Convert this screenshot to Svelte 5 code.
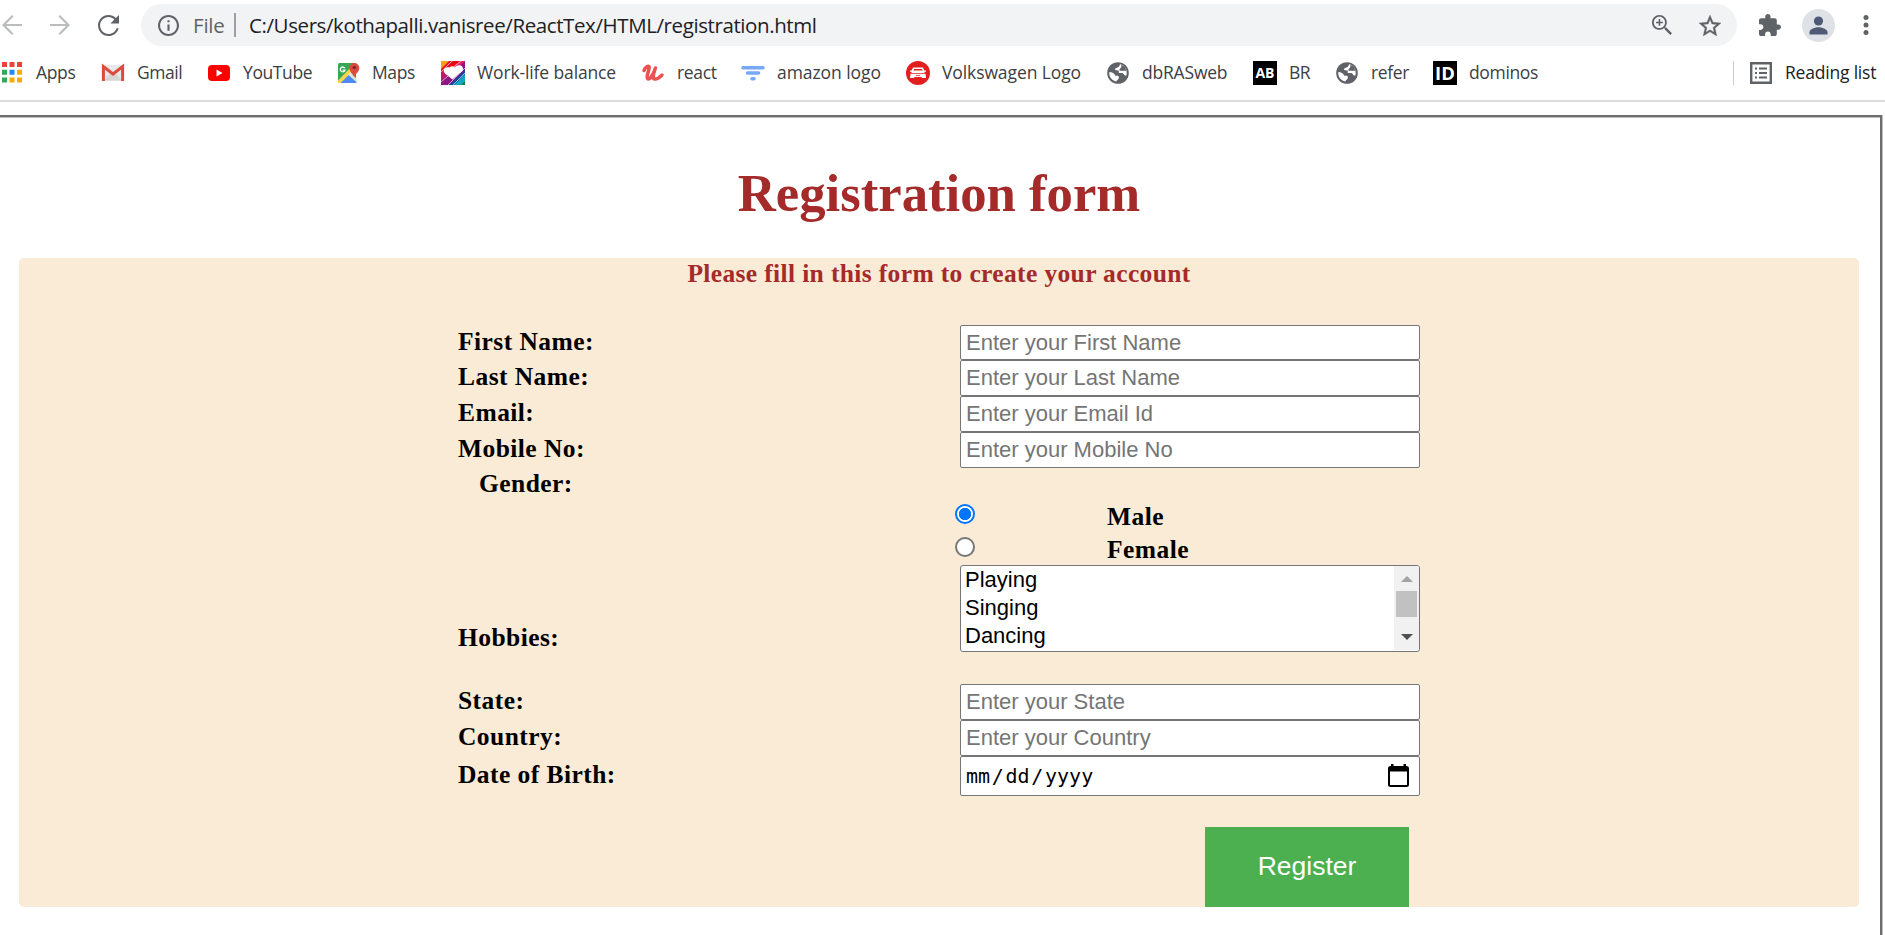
<script>
  const bookmarks = [
    { icon: 'apps', label: 'Apps', width: 101, spacing: -0.35 },
    { icon: 'gmail', label: 'Gmail', width: 106, spacing: -0.45 },
    { icon: 'youtube', label: 'YouTube', width: 129, spacing: -0.4 },
    { icon: 'maps', label: 'Maps', width: 105, spacing: -0.4 },
    { icon: 'heart', label: 'Work-life balance', width: 200, spacing: -0.13 },
    { icon: 'udemy', label: 'react', width: 100, spacing: -0.35 },
    { icon: 'filter', label: 'amazon logo', width: 165, spacing: -0.07 },
    { icon: 'car', label: 'Volkswagen Logo', width: 200, spacing: -0.1 },
    { icon: 'globe', label: 'dbRASweb', width: 147, spacing: -0.2 },
    { icon: 'ab', label: 'BR', width: 82, spacing: -0.6 },
    { icon: 'globe', label: 'refer', width: 98, spacing: -0.35 },
    { icon: 'id', label: 'dominos', width: 120, spacing: -0.35 }
  ];
  const identity = [
    ['First Name:', 'Enter your First Name'],
    ['Last Name:', 'Enter your Last Name'],
    ['Email:', 'Enter your Email Id'],
    ['Mobile No:', 'Enter your Mobile No']
  ];
  const place = [
    ['State:', 'Enter your State'],
    ['Country:', 'Enter your Country']
  ];
  const hobbies = ['Playing', 'Singing', 'Dancing'];
  const appColors = ['#ea4335', '#ea4335', '#ea4335', '#34a853', '#1a8cff', '#fbab00', '#34a853', '#fbab00', '#fbab00'];
</script>

{#snippet glyph(name)}
  <svg class="glyph" viewBox="0 0 24 24">
    {#if name === 'apps'}
      {#each appColors as color, i}
        <rect x={2 + (i % 3) * 7.5} y={1 + Math.floor(i / 3) * 7.75} width="5" height="5" fill={color} />
      {/each}
    {:else if name === 'gmail'}
      <rect x="1" y="4" width="22" height="16" rx="1.5" fill="#e9e9e9" />
      <path d="M3 19.5 9.5 12h5l6.500 7.500z" fill="#d6d6d6" />
      <path d="M2.400 20V5.500L12 13l9.600-7.500V20" fill="none" stroke="#dd4b3e" stroke-width="3" />
    {:else if name === 'youtube'}
      <rect x="1" y="4" width="22" height="16" rx="4" fill="#f00" />
      <path d="M9.500 8.500v7l6-3.500z" fill="#fff" />
    {:else if name === 'maps'}
      <path d="M2 3.500Q2 2 3.500 2H20v20H2z" fill="#34a853" />
      <path d="M3 22 12 13l9 9z" fill="#4c8bf5" />
      <path d="M2 19.500 17 4l3 3L4.500 22H2z" fill="#fdd446" />
      <path d="m12 13.500 2.500-2.500 7 8v3z" fill="#e3e3e3" />
      <path d="M8.800 7.200A2.400 2.400 0 1 0 9 9.200H6.700" fill="none" stroke="#fff" stroke-width="1.300" />
      <path d="M18.300 17c-.5-4.500-5-5.500-5-10a5 5 0 0 1 10 0c0 4.500-4.500 5.500-5 10z" fill="#dd4b3e" />
      <circle cx="18.300" cy="6.500" r="1.800" fill="#7a2c27" />
    {:else if name === 'heart'}
      <rect width="24" height="24" fill="#8b1580" />
      <path d="M0 0h14L0 13z" fill="#f7a11b" />
      <path d="M8 0h7L0 15V8z" fill="#e8112d" />
      <path d="M14 0h10L10 14z" fill="#e91e63" />
      <path d="M14 0h4L6 12H2z" fill="#f20000" />
      <path d="M0 12 5 8l7 12-4 4H0z" fill="#c2186b" />
      <path d="M0 20 8 13l6 6-5 5H0z" fill="#8e1683" />
      <path d="M24 9v7l-8 8H8z" fill="#134a9f" />
      <path d="M24 13v11H13z" fill="#12a5c4" />
      <path d="M24 20v4h-4z" fill="#17813f" />
      <path d="M0 11 11 0M4 13 20 0M0 21l7-6M7 24 24 7M12 24l12-12" stroke="#fff" stroke-width=".6" />
      <path d="M11.500 18.500 4 12.500C1 9 4 5.500 8.500 6.500c1.500-1.700 4-1.500 5 0C17 3 21.500 4 22 7.500c.3 3-3 4-4.500 5.500z" fill="#fff" />
    {:else if name === 'udemy'}
      <path d="M3 9.500C4 6 7 4.800 8 5.500c1.500 1.500-3.200 9-1.500 12 1.800 2.500 6-4 8-10.500-2 5.500-3.300 10.500-1 11 3 .8 5-1.500 7.500-4" fill="none" stroke="#ec5252" stroke-width="3.500" stroke-linecap="round" stroke-linejoin="round" />
    {:else if name === 'filter'}
      <path d="M2 6.700h20M6.500 12h11M11 17.700h2" stroke="#76a9fa" stroke-width="3.600" stroke-linecap="round" />
    {:else if name === 'car'}
      <circle cx="12" cy="12" r="12" fill="#e21f1f" />
      <path d="M7 6.500h10l1.300 3H20v1.300h-1.300l-.4 1.200H5.700l-.4-1.200H4V9.500h1.700zM4.500 12.700h15l.5 4.300h-4l-.5-1h-7l-.5 1H4z" fill="#fff" />
      <path d="M8 8h8l.5 1.500h-9zM6.500 14h3l.7.800h3.600l.7-.8h3" fill="#e21f1f" />
    {:else if name === 'globe'}
      <circle cx="12" cy="12" r="10.800" fill="#5f6368" />
      <path d="M14 3.200c-.6 2-1 2.800-2.500 3.200-2.300.4-2.800 1.400-2.300 2.400.8 1.200 2.700.4 3.600 1v2.200h2.500c1.600 0 2.500.7 2.800 1.700.4.900 1.300.9 2.400.5 1-5-1.300-9.800-6.500-11zM3.300 11c-.5 5 2.700 8.600 7 9.400.3-1.500 2.600-1.800 2.600-4.200 0-1-.8-1.500-1.800-1.500H9.500C8.500 12.500 6 11 3.300 11z" fill="#fff" />
      <path d="M15 3.500c1 1.700.2 3.200-1.200 4.500-.8.800-.3 1.800 1 1.800h5.500L19 6z" fill="#5f6368" />
    {:else if name === 'ab' || name === 'id'}
      <rect width="24" height="24" fill="#000" />
      <text x="12" y={name === 'id' ? 18.6 : 17} text-anchor="middle" font-family="Open Sans, sans-serif" font-size={name === 'id' ? 18.5 : 14} font-weight="700" fill="#fff">{name.toUpperCase()}</text>
    {/if}
  </svg>
{/snippet}

{#snippet field(label, hint, i)}
  <div class="row" class:first={i === 0 && label[0] === 'F'}>
    <label class="caption" for={label}>{label}</label>
    <input class="box" id={label} type="text" placeholder={hint} />
  </div>
{/snippet}

<div class="screen">
  <header>
    <div class="toolbar">
      <svg class="nav back" viewBox="4 4 16 16"><path d="M20 11.200H7.200l6-6L12 4l-8 8 8 8 1.200-1.200-6-6H20z" /></svg>
      <svg class="nav forward" viewBox="4 4 16 16"><path d="M4 11.200h12.800l-6-6L12 4l8 8-8 8-1.200-1.200 6-6H4z" /></svg>
      <svg class="nav reload" viewBox="4 4 16 16"><path d="M17.650 6.350C16.200 4.900 14.210 4 12 4c-4.420 0-7.990 3.580-7.990 8s3.570 8 7.990 8c3.730 0 6.840-2.550 7.730-6h-1.600c-.82 2.600-3.240 4.400-6.130 4.400-3.550 0-6.400-2.850-6.400-6.400s2.850-6.400 6.400-6.400c1.800 0 3.340.75 4.480 1.920L13.500 10.500H20V4z" /></svg>
      <div class="omnibox">
        <svg class="info" viewBox="2 2 20 20"><path d="M11 7h2v2h-2zm0 4h2v6h-2zm1-9C6.480 2 2 6.480 2 12s4.480 10 10 10 10-4.480 10-10S17.520 2 12 2zm0 18c-4.410 0-8-3.590-8-8s3.590-8 8-8 8 3.590 8 8-3.590 8-8 8z" /></svg>
        <span class="scheme">File</span>
        <span class="bar"></span>
        <span class="url">C:/Users/kothapalli.vanisree/ReactTex/HTML/registration.html</span>
        <svg class="zoom" viewBox="3 3 17.500 17.500"><path d="M15.500 14h-.79l-.28-.27C15.410 12.590 16 11.110 16 9.500 16 5.910 13.090 3 9.500 3S3 5.910 3 9.500 5.910 16 9.500 16c1.610 0 3.090-.59 4.230-1.570l.27.28v.79l5 4.990L20.490 19l-4.990-5zm-6 .4C6.800 14.400 4.600 12.200 4.600 9.500s2.200-4.900 4.900-4.900 4.900 2.200 4.900 4.900-2.200 4.900-4.900 4.900z" /><path d="M12.500 10.200h-2.300v2.300H8.800v-2.300H6.500V8.800h2.300V6.500h1.400v2.300h2.300z" /></svg>
        <svg class="star" viewBox="2 2 20 19"><path d="M22 9.240l-7.190-.62L12 2 9.190 8.630 2 9.240l5.460 4.730L5.820 21 12 17.270 18.180 21l-1.630-7.030L22 9.240zM12 15.400l-3.760 2.270 1-4.280-3.320-2.880 4.380-.38L12 6.100l1.710 4.040 4.380.38-3.320 2.880 1 4.280L12 15.400z" stroke="#5f6368" stroke-width=".3" /></svg>
      </div>
      <svg class="puzzle" viewBox="2 1 21 21"><path d="M20.500 11H19V7c0-1.100-.9-2-2-2h-4V3.500C13 2.120 11.880 1 10.500 1S8 2.120 8 3.500V5H4c-1.100 0-1.990.9-1.990 2v3.800H3.500c1.490 0 2.700 1.210 2.700 2.700s-1.210 2.700-2.700 2.700H2V20c0 1.100.9 2 2 2h3.800v-1.500c0-1.490 1.210-2.700 2.700-2.700 1.490 0 2.700 1.210 2.700 2.700V22H17c1.100 0 2-.9 2-2v-4h1.500c1.380 0 2.500-1.120 2.500-2.500S21.880 11 20.500 11z" /></svg>
      <svg class="avatar" viewBox="0 0 33 33"><circle cx="16.500" cy="16.500" r="16.500" fill="#dee1e6" /><circle cx="16.500" cy="12" r="4.600" /><path d="M7.500 25.500v-2.300c0-3.400 6-5 9-5s9 1.600 9 5v2.300z" /></svg>
      <svg class="dots" viewBox="0 0 6 22"><circle cx="3" cy="3.500" r="2.500" /><circle cx="3" cy="11" r="2.500" /><circle cx="3" cy="18.500" r="2.500" /></svg>
    </div>
    <nav class="bookmarks">
      {#each bookmarks as b}
        <a class="bookmark" href="#top" style:width="{b.width}px">
          {@render glyph(b.icon)}
          <span style:letter-spacing="{b.spacing}px">{b.label}</span>
        </a>
      {/each}
      <div class="reading">
        <svg viewBox="0 0 22 22"><path d="M1.200 1.200h19.600v19.600H1.200z" fill="none" stroke="#5f6368" stroke-width="2.400" /><path d="M5 5.500h2v2H5zm4 0h8v2H9zM5 10h2v2H5zm4 0h8v2H9zm-4 4.500h2v2H5zm4 0h8v2H9z" /></svg>
        <span>Reading list</span>
      </div>
    </nav>
  </header>

  <main>
    <h1>Registration form</h1>
    <form>
      <h2>Please fill in this form to create your account</h2>
      {#each identity as [label, hint], i}
        {@render field(label, hint, i)}
      {/each}
      <div class="gender caption">Gender:</div>
      <label class="choice"><input type="radio" name="gender" checked /><span class="caption">Male</span></label>
      <label class="choice second"><input type="radio" name="gender" /><span class="caption">Female</span></label>
      <div class="row hobbies">
        <span class="caption">Hobbies:</span>
        <div class="list">
          <ul>
            {#each hobbies as h}<li>{h}</li>{/each}
          </ul>
          <div class="scroll">
            <svg viewBox="0 0 12 6"><path d="M0 6 6 0l6 6z" fill="#a3a3a3" /></svg>
            <div class="thumb"></div>
            <svg viewBox="0 0 12 6"><path d="m0 0 6 6 6-6z" fill="#505050" /></svg>
          </div>
        </div>
      </div>
      {#each place as [label, hint], i}
        {@render field(label, hint, i)}
      {/each}
      <div class="row dob">
        <span class="caption">Date of Birth:</span>
        <div class="box date">
          <span>mm</span><span>/</span><span>dd</span><span>/</span><span>yyyy</span>
          <svg viewBox="0 0 21 23"><path d="M3 0h2.500v2h10V0H18v2h.5A2.500 2.500 0 0 1 21 4.500v16a2.500 2.500 0 0 1-2.500 2.500h-16A2.500 2.500 0 0 1 0 20.500v-16A2.500 2.500 0 0 1 2.500 2H3zM2 7.500V21h17V7.500z" /></svg>
        </div>
      </div>
      <button type="button">Register</button>
    </form>
  </main>
</div>

<style>
  :global(body) { overflow: hidden; background: #fff; }
  * { box-sizing: border-box; }
  .screen { width: 1885px; height: 935px; overflow: hidden; display: flex; flex-direction: column; }
  svg { display: block; flex: none; }
  header { height: 102px; flex: none; border-bottom: 2px solid #dadce0; font-family: "Open Sans", "Noto Sans", sans-serif; }
  .toolbar { display: flex; align-items: center; height: 50px; fill: #5f6368; }
  .nav { width: 20px; height: 20px; }
  .back { margin-left: 2px; fill: #babcbe; }
  .forward { margin-left: 28px; fill: #babcbe; }
  .reload { margin-left: 28px; width: 21px; height: 21px; }
  .omnibox { display: flex; align-items: center; width: 1596px; height: 42px; margin-left: 22px; padding-left: 17px; border-radius: 21px; background: #f1f3f4; font-size: 20.500px; white-space: nowrap; }
  .info { width: 21px; height: 21px; }
  .scheme { width: 41px; margin-left: 14px; color: #5f6368; letter-spacing: -.2px; }
  .bar { width: 2px; height: 24px; background: #9aa0a6; }
  .url { flex: 1; margin-left: 13px; color: #202124; letter-spacing: -.4px; }
  .zoom { width: 20px; height: 20px; }
  .star { width: 22px; height: 21px; margin: 0 16px 0 27px; }
  .puzzle { width: 22px; height: 22px; margin-left: 22px; }
  .avatar { width: 33px; height: 33px; margin-left: 21px; fill: #4f5b76; }
  .dots { width: 6px; height: 22px; margin-left: 28px; }
  .bookmarks { display: flex; align-items: center; height: 46px; font-size: 17.500px; color: #3c4043; white-space: nowrap; }
  .bookmark { display: flex; align-items: center; gap: 12px; flex: none; color: inherit; text-decoration: none; }
  .bookmark span, .reading span { padding-bottom: 2px; }
  .glyph { width: 24px; height: 24px; }
  .reading { display: flex; align-items: center; gap: 13px; height: 24px; margin-left: 180px; padding-left: 16px; border-left: 1px solid #c8cacd; color: #202124; letter-spacing: -.2px; }
  .reading svg { width: 22px; height: 22px; fill: #5f6368; }

  main { width: 1882px; height: 820px; margin-top: 13px; flex: none; border-top: 2px solid #6d6d6d; border-right: 2px solid #6d6d6d; box-shadow: inset 0 1px #c0c0c0, 1px 0 #c0c0c0; font-family: "Liberation Serif", serif; }
  h1 { margin: 0; padding: 46px 2px 0 0; height: 141px; font-size: 52.700px; line-height: 60px; color: #a52a2a; text-align: center; }
  form { width: 1840px; height: 649px; margin-left: 19px; border-radius: 5px; background: #faebd7; overflow: hidden; }
  h2 { margin: 0; height: 67px; font-size: 25.500px; line-height: 32px; letter-spacing: .36px; color: #a52a2a; text-align: center; }
  .caption { font-size: 25.500px; line-height: 34px; letter-spacing: .44px; font-weight: 700; color: #000; white-space: nowrap; }
  .row { display: grid; grid-template-columns: 502px 460px; height: 36px; padding-left: 439px; }
  .first { height: 35px; }
  .box { width: 460px; height: 100%; border: 1px solid #767676; border-radius: 2px; background: #fff; padding: 0 0 1px 5px; font: 22px "Liberation Sans", Arial, sans-serif; outline: 0; }
  .first .box { padding-bottom: 0; }
  .box::placeholder { color: #757575; opacity: 1; }
  .gender { height: 32px; padding-left: 460px; line-height: 32px; }
  .choice { display: flex; align-items: center; height: 33px; padding: 0 0 5px 935.500px; }
  .choice input { appearance: none; width: 20px; height: 20px; flex: none; margin: 0 132.500px 0 0; border: 2px solid #767676; border-radius: 50%; background: #fff; }
  .choice input:checked { border-color: #0075ff; background: radial-gradient(circle, #0075ff 5.800px, #fff 6.500px); }
  .choice .caption { padding-top: 5px; }
  .second { height: 32px; padding-bottom: 4px; }
  .second .caption { padding-top: 6px; }
  .hobbies { height: 119px; }
  .hobbies .caption { padding-top: 56px; }
  .list { display: flex; justify-content: space-between; height: 87px; border: 1px solid #767676; border-radius: 3px; background: #fff; overflow: hidden; }
  ul { margin: 0; padding: 0 0 0 4px; list-style: none; font: 22px/28px "Liberation Sans", Arial, sans-serif; color: #000; }
  .scroll { display: flex; flex-direction: column; align-items: center; width: 25px; height: 84px; padding-top: 10px; background: #f1f1f1; }
  .scroll svg { width: 12px; height: 6px; }
  .thumb { width: 21px; height: 26px; margin: 9px 0 17px; background: #c1c1c1; }
  .dob { height: 40px; }
  .dob .caption { line-height: 38px; }
  .date { display: flex; align-items: center; padding-right: 10px; padding-bottom: 0; font: 20px "DejaVu Sans Mono", monospace; }
  .date span { margin-right: 1.700px; }
  .date svg { width: 21px; height: 23px; margin: 0 0 1px auto; }
  button { display: block; width: 204px; height: 80px; margin: 31px 0 0 1186px; border: 0; padding-bottom: 3px; background: #4caf50; color: #fff; font: 26.500px "Liberation Sans", Arial, sans-serif; }
</style>
